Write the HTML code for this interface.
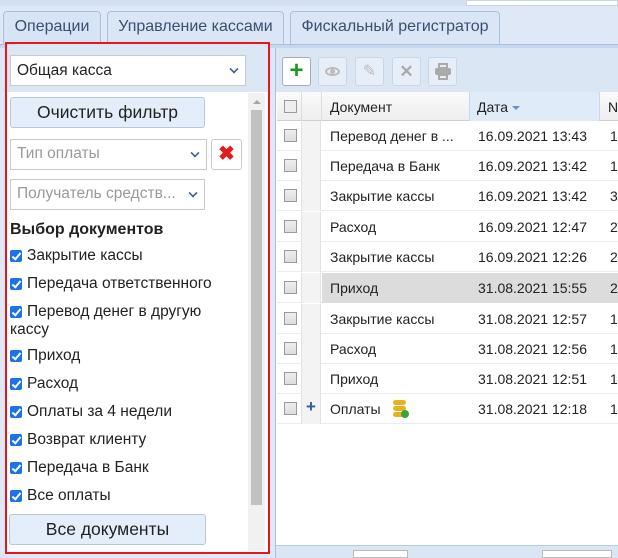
<!DOCTYPE html>
<html><head><meta charset="utf-8"><style>
*{box-sizing:border-box;margin:0;padding:0}
body{width:618px;height:558px;overflow:hidden;background:#dfe8f6;font-family:"Liberation Sans",Arial,sans-serif;font-size:14px;color:#222;position:relative}
.a{position:absolute}
.tab{position:absolute;top:11px;height:33px;border:1px solid #a9c0e0;border-bottom:none;border-radius:4px 4px 0 0;background:#dae6f5;color:#3a4f6e;font-size:16px;line-height:30px;text-align:center}
.sel{position:absolute;background:#fff;border:1px solid #c9c9c9;font-size:15.5px;line-height:28px;padding-left:6px;white-space:nowrap}
.chev{position:absolute;right:7px;top:9px;width:8px;height:8px;border-right:2px solid #3f5f8f;border-bottom:2px solid #3f5f8f;transform:rotate(45deg) scale(.8)}
.btn{position:absolute;background:#e4eefb;border:1px solid #b5c6de;border-radius:3px;text-align:center;font-size:17.5px;color:#222}
.cb{position:absolute;left:10px;width:12px;height:12px;background:#1a73e8;border-radius:2px}
.cb:after{content:"";position:absolute;left:4px;top:1px;width:3px;height:7px;border-right:2px solid #fff;border-bottom:2px solid #fff;transform:rotate(40deg)}
.lbl{position:absolute;left:27px;font-size:15.5px;color:#222;white-space:nowrap}
.row{position:absolute;left:277px;width:341px;height:30px;border-bottom:1px solid #ececec;background:#fff}
.row .c{position:absolute;left:7px;top:8px;width:13px;height:13px;border:1px solid #9a9a9a;background:linear-gradient(#eee,#ddd)}
.row .e{position:absolute;left:24px;top:0;width:20px;height:30px;background:#f3f3f3;border-left:1px solid #e2e2e2;border-right:1px solid #e2e2e2}
.row .d{position:absolute;left:53px;top:7px}
.row .t{position:absolute;left:201px;top:7px}
.row .n{position:absolute;left:333px;top:7px}
.tb{position:absolute;top:57px;width:29px;height:29px;border:1px solid #c9d6e8;border-radius:3px;background:#e8eef7}
</style></head><body>
<div class="a" style="left:0;top:0;width:618px;height:6px;background:#d2e0f2"></div>
<div class="a" style="left:466px;top:0;width:152px;height:6px;background:#fff;border:1px solid #c8d4e4"></div>
<div class="tab" style="left:3px;width:98px;background:#d6e4f6">Операции</div>
<div class="tab" style="left:107px;width:177px">Управление кассами</div>
<div class="tab" style="left:290px;width:210px">Фискальный регистратор</div>
<div class="a" style="left:0;top:44px;width:618px;height:4px;background:#c6d7ee;border-top:1px solid #a9c0e0"></div>

<div class="a" style="left:5px;top:42px;width:265px;height:512px;border:2px solid #e8151b;background:#fff"></div>
<div class="a" style="left:7px;top:44px;width:261px;height:48px;background:#dce7f6"></div>
<div class="sel" style="left:10px;top:55px;width:236px;height:31px;color:#222;line-height:29px">Общая касса<span class="chev"></span></div>
<div class="a" style="left:248px;top:93px;width:17px;height:458px;background:#f1f1f1"></div>
<div class="a" style="left:251px;top:110px;width:11px;height:395px;background:#c1c1c1"></div>
<div class="a" style="left:253px;top:100px;width:0;height:0;border:4px solid transparent;border-bottom-color:#a5a5a5;border-top:none"></div>
<div class="btn" style="left:10px;top:97px;width:195px;height:31px;line-height:29px">Очистить фильтр</div>
<div class="sel" style="left:10px;top:139px;width:197px;height:31px;color:#999">Тип оплаты<span class="chev"></span></div>
<div class="a" style="left:211px;top:139px;width:31px;height:31px;border:1px solid #c9c9c9;border-radius:3px;background:#fff;color:#e31b1b;font-weight:bold;font-size:20px;text-align:center;line-height:29px">✖</div>
<div class="sel" style="left:10px;top:179px;width:195px;height:31px;color:#999">Получатель средств...<span class="chev"></span></div>
<div class="a" style="left:10px;top:221px;font-weight:bold;font-size:16px">Выбор документов</div>
<div class="cb" style="top:250px"></div><div class="lbl" style="top:247px">Закрытие кассы</div>
<div class="cb" style="top:278px"></div><div class="lbl" style="top:275px">Передача ответственного</div>
<div class="cb" style="top:306px"></div><div class="lbl" style="top:303px">Перевод денег в другую</div>
<div class="lbl" style="left:10px;top:321px">кассу</div>
<div class="cb" style="top:350px"></div><div class="lbl" style="top:347px">Приход</div>
<div class="cb" style="top:378px"></div><div class="lbl" style="top:375px">Расход</div>
<div class="cb" style="top:406px"></div><div class="lbl" style="top:403px">Оплаты за 4 недели</div>
<div class="cb" style="top:434px"></div><div class="lbl" style="top:431px">Возврат клиенту</div>
<div class="cb" style="top:462px"></div><div class="lbl" style="top:459px">Передача в Банк</div>
<div class="cb" style="top:490px"></div><div class="lbl" style="top:487px">Все оплаты</div>
<div class="btn" style="left:9px;top:514px;width:197px;height:31px;line-height:29px">Все документы</div>

<div class="a" style="left:275px;top:48px;width:343px;height:510px;background:#fff;border-left:1px solid #a9c0e0"></div>
<div class="a" style="left:276px;top:48px;width:342px;height:44px;background:#dbe6f5"></div>
<div class="tb" style="left:282px;background:#fff;border-color:#aab;color:#1c9a1c;font-size:24px;font-weight:bold;text-align:center;line-height:26px">+</div>
<div class="tb" style="left:318px"><div class="a" style="left:6px;top:9px;width:15px;height:9px;border:2px solid #bbb;border-radius:50%"></div><div class="a" style="left:11px;top:11px;width:5px;height:5px;background:#bbb;border-radius:50%"></div></div>
<div class="tb" style="left:355px;color:#bbb;text-align:center;line-height:27px;font-size:16px">✎</div>
<div class="tb" style="left:392px;color:#aaa;text-align:center;line-height:27px;font-size:17px;font-weight:bold">✕</div>
<div class="tb" style="left:428px"><div class="a" style="left:9px;top:5px;width:10px;height:6px;border:2px solid #aaa"></div><div class="a" style="left:6px;top:10px;width:16px;height:7px;background:#aaa;border-radius:2px"></div><div class="a" style="left:9px;top:16px;width:10px;height:6px;border:2px solid #aaa;background:#e8eef7"></div></div>
<div class="a" style="left:277px;top:92px;width:341px;height:29px;background:linear-gradient(#fafafa,#eee);border-bottom:1px solid #d0d0d0"></div>
<div class="a" style="left:469px;top:92px;width:131px;height:29px;background:#e0ebf9;border-left:1px solid #c8d8ee;border-right:1px solid #c8d8ee"></div>
<div class="a" style="left:284px;top:100px;width:13px;height:13px;border:1px solid #9a9a9a;background:#eee"></div>
<div class="a" style="left:301px;top:92px;width:1px;height:29px;background:#ddd"></div>
<div class="a" style="left:321px;top:92px;width:1px;height:29px;background:#ddd"></div>
<div class="a" style="left:330px;top:99px">Документ</div>
<div class="a" style="left:477px;top:99px">Дата <span style="display:inline-block;border:4px solid transparent;border-top:4px solid #6d8fc0;border-bottom:none;vertical-align:middle"></span></div>
<div class="a" style="left:608px;top:99px">N</div>

<div class="row" style="top:121px"><div class="c"></div><div class="e"></div><div class="d">Перевод денег в ...</div><div class="t">16.09.2021 13:43</div><div class="n">1</div></div>
<div class="row" style="top:151px"><div class="c"></div><div class="e"></div><div class="d">Передача в Банк</div><div class="t">16.09.2021 13:42</div><div class="n">1</div></div>
<div class="row" style="top:181px"><div class="c"></div><div class="e"></div><div class="d">Закрытие кассы</div><div class="t">16.09.2021 13:42</div><div class="n">3</div></div>
<div class="row" style="top:212px"><div class="c"></div><div class="e"></div><div class="d">Расход</div><div class="t">16.09.2021 12:47</div><div class="n">2</div></div>
<div class="row" style="top:242px"><div class="c"></div><div class="e"></div><div class="d">Закрытие кассы</div><div class="t">16.09.2021 12:26</div><div class="n">2</div></div>
<div class="row" style="top:273px;background:#fff"><div class="a" style="left:45px;top:0;width:296px;height:30px;background:#dcdcdc"></div><div class="c"></div><div class="e"></div><div class="d">Приход</div><div class="t">31.08.2021 15:55</div><div class="n">2</div></div>
<div class="row" style="top:304px"><div class="c"></div><div class="e"></div><div class="d">Закрытие кассы</div><div class="t">31.08.2021 12:57</div><div class="n">1</div></div>
<div class="row" style="top:334px"><div class="c"></div><div class="e"></div><div class="d">Расход</div><div class="t">31.08.2021 12:56</div><div class="n">1</div></div>
<div class="row" style="top:364px"><div class="c"></div><div class="e"></div><div class="d">Приход</div><div class="t">31.08.2021 12:51</div><div class="n">1</div></div>
<div class="row" style="top:394px"><div class="c"></div><div class="e"><span style="position:absolute;left:4px;top:3px;color:#2b5b9e;font-weight:bold;font-size:17px">+</span></div><div class="d">Оплаты</div>
<div class="a" style="left:116px;top:6px;width:13px;height:5px;background:#e8b21c;border-radius:3px"></div><div class="a" style="left:116px;top:12px;width:13px;height:5px;background:#e8b21c;border-radius:3px"></div><div class="a" style="left:116px;top:18px;width:13px;height:5px;background:#e8b21c;border-radius:3px"></div><div class="a" style="left:124px;top:16px;width:8px;height:8px;background:#3aa33a;border-radius:50%"></div>
<div class="t">31.08.2021 12:18</div><div class="n">1</div></div>
<div class="a" style="left:276px;top:545px;width:342px;height:13px;background:#dbe6f5;border-top:1px solid #b8cbe6"></div>
<div class="a" style="left:353px;top:550px;width:55px;height:8px;background:#fff;border:1px solid #bbb"></div>
<div class="a" style="left:542px;top:550px;width:70px;height:8px;background:#fff;border:1px solid #bbb"></div>
</body></html>
